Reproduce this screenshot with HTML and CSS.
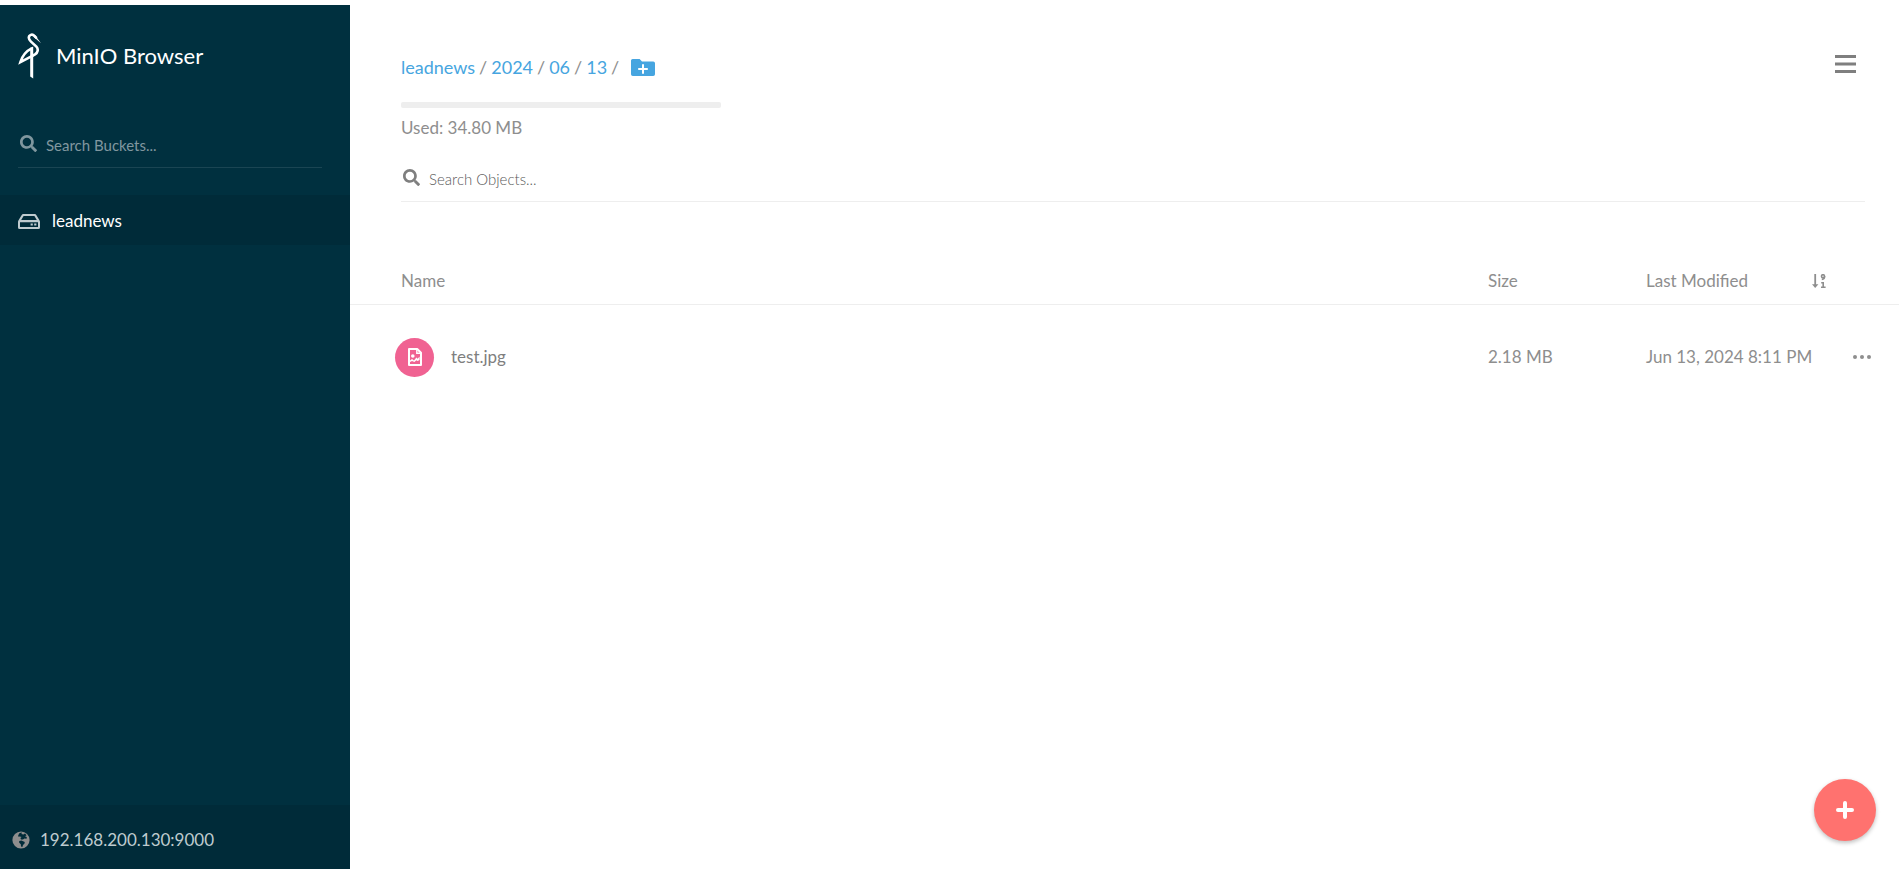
FILE: index.html
```
<!DOCTYPE html>
<html lang="en">
<head>
    <meta charset="UTF-8">
    <meta name="viewport" content="width=device-width, initial-scale=1.0">
    <title>MinIO Browser</title>
    <link rel="stylesheet" href="styles.css">
</head>
<body>
    <div class="page">
        <aside class="sidebar">
            <div class="brand">
                <svg class="brand-logo" viewBox="0 0 24 46" fill="none" stroke="#fff">
                    <path d="M18.6 5.2L16.4 2.8C14.2 .6 10.8 1.8 10.8 4.8C10.8 6.4 11.8 7.4 13 8.6L18.4 13.6C20.6 16 20 19.4 17 21.4C15.4 22.4 13 23.6 2.4 29.2C4 24 7.6 18.4 14 15.2" stroke-width="2.6"/>
                    <path d="M16.6 1.4L23 10.2L15.4 3.8ZM12.2 15L15.2 13.4V45.5L12.2 43.4Z" fill="#fff" stroke="none"/>
                </svg>
                <h1>MinIO Browser</h1>
            </div>

            <div class="search search-buckets">
                <svg viewBox="0 0 512 512"><path d="M505 442.7L405.3 343c-4.5-4.5-10.6-7-17-7H372c27.6-35.3 44-79.7 44-128C416 93.1 322.9 0 208 0S0 93.1 0 208s93.1 208 208 208c48.3 0 92.7-16.4 128-44v16.3c0 6.4 2.5 12.5 7 17l99.7 99.7c9.4 9.4 24.6 9.4 33.9 0l28.3-28.3c9.4-9.4 9.4-24.6.1-34zM208 336c-70.7 0-128-57.2-128-128 0-70.7 57.2-128 128-128 70.7 0 128 57.2 128 128 0 70.7-57.2 128-128 128z"/></svg>
                <input type="text" placeholder="Search Buckets..." aria-label="Search Buckets">
            </div>

            <nav class="buckets">
                <a class="bucket active" href="#leadnews">
                    <svg viewBox="0 0 22 15">
                        <path fill-rule="evenodd" d="M5.2 0H16.8Q17.8 0 18.3 .9L21.6 6.4Q22 7.2 22 8V13.4Q22 15 20.4 15H1.6Q0 15 0 13.4V8Q0 7.2 .4 6.4L3.7 .9Q4.2 0 5.2 0ZM5.6 2L3.2 6H18.8L16.4 2ZM2 8.2V13H20V8.2Z"/>
                        <path d="M12.6 9.4h2.2v2.2h-2.2zM16.2 9.4h2.2v2.2h-2.2z"/>
                    </svg>
                    <span>leadnews</span>
                </a>
            </nav>

            <div class="host">
                <svg viewBox="0 0 18 18">
                    <circle cx="9" cy="9" r="8.6" fill="#8e8e8e"/>
                    <path fill="#002b39" d="M7.6 2L10 1.4L9.4 3L11.4 3.4L13 2.6L14.6 4.2L13 5.2L14.8 6L14.6 7.8L12.4 7.4L11 8.6L9 8.4L8.4 7L9.6 6L7.8 5.4L6.4 5.8L6.2 4.2ZM7.2 10L9.4 9.6L12.8 11L12.4 12.8L11 14L10.4 16L9 15.6L8.8 13.2L7.2 11.8Z"/>
                </svg>
                <a href="#host">192.168.200.130:9000</a>
            </div>
        </aside>

        <main class="content">
            <header class="toolbar">
                <div class="location">
                    <nav class="breadcrumb">
                        <a href="#leadnews">leadnews</a><span>/</span><a href="#2024">2024</a><span>/</span><a href="#06">06</a><span>/</span><a href="#13">13</a><span>/</span>
                        <button class="icon-btn new-path" aria-label="New path">
                            <svg viewBox="0 0 24 17">
                                <path fill="#46a5e0" d="M1.6 0H8.6L11 2.4H22.2Q24 2.4 24 4.2V15.2Q24 17 22.2 17H1.8Q0 17 0 15.2V1.6Q0 0 1.6 0Z"/>
                                <path stroke="#fff" stroke-width="2" d="M12 5.2V14.8M7.2 10H16.8"/>
                            </svg>
                        </button>
                    </nav>
                    <div class="usage">
                        <div class="usage-bar"></div>
                        <p>Used: 34.80 MB</p>
                    </div>
                </div>
                <button class="icon-btn menu-btn" aria-label="Menu">
                    <svg viewBox="0 0 21 20" stroke="#7f7f7f" stroke-width="3"><path d="M0 2.5H21M0 10H21M0 17.5H21"/></svg>
                </button>
            </header>

            <div class="search search-objects">
                <svg viewBox="0 0 512 512"><path d="M505 442.7L405.3 343c-4.5-4.5-10.6-7-17-7H372c27.6-35.3 44-79.7 44-128C416 93.1 322.9 0 208 0S0 93.1 0 208s93.1 208 208 208c48.3 0 92.7-16.4 128-44v16.3c0 6.4 2.5 12.5 7 17l99.7 99.7c9.4 9.4 24.6 9.4 33.9 0l28.3-28.3c9.4-9.4 9.4-24.6.1-34zM208 336c-70.7 0-128-57.2-128-128 0-70.7 57.2-128 128-128 70.7 0 128 57.2 128 128 0 70.7-57.2 128-128 128z"/></svg>
                <input type="text" placeholder="Search Objects..." aria-label="Search Objects">
            </div>

            <table class="objects">
                <thead>
                    <tr>
                        <th class="col-name">Name</th>
                        <th class="col-size">Size</th>
                        <th class="col-date">
                            <div class="sortable">
                                Last Modified
                                <svg viewBox="0 0 14 14" fill="none" stroke="#8e8e8e">
                                    <path d="M3.2 0V12" stroke-width="1.8"/>
                                    <path d="M0 10.2H6.4L3.2 14Z" fill="#8e8e8e" stroke="none"/>
                                    <circle cx="11" cy="2.2" r="1.5" stroke-width="1.6"/>
                                    <path d="M12.6 2.2Q13 5 9.8 5.4M9.2 8.8H11.2V13.2M9 13.2H13.6" stroke-width="1.6"/>
                                </svg>
                            </div>
                        </th>
                        <th class="col-actions"></th>
                    </tr>
                </thead>
                <tbody>
                    <tr>
                        <td class="col-name">
                            <div class="object">
                                <span class="object-icon">
                                    <svg viewBox="0 0 14 18" fill="none" stroke="#fff">
                                        <path d="M1 1H9.2L13 4.8V17H1Z" stroke-width="2" stroke-linejoin="round"/>
                                        <path d="M8.8 1V5.2H13" stroke-width="1.4"/>
                                        <circle cx="4.8" cy="8" r="1.8" fill="#fff" stroke="none"/>
                                        <path d="M2 12.4L4 11L6 12.4L8.4 9.6L9.6 10.8L11.6 8.6V12L9.6 13L8.4 12.2L6.4 14L4 13L2 14Z" fill="#fff" stroke="none"/>
                                    </svg>
                                </span>
                                <a href="#test.jpg">test.jpg</a>
                            </div>
                        </td>
                        <td class="col-size">2.18 MB</td>
                        <td class="col-date">Jun 13, 2024 8:11 PM</td>
                        <td class="col-actions">
                            <button class="icon-btn more-btn" aria-label="Actions">
                                <svg viewBox="0 0 18 4" fill="#8e8e8e"><circle cx="2" cy="2" r="2"/><circle cx="9" cy="2" r="2"/><circle cx="16" cy="2" r="2"/></svg>
                            </button>
                        </td>
                    </tr>
                </tbody>
            </table>
        </main>

        <button class="create-btn" aria-label="Create">
            <svg viewBox="0 0 18 18" stroke="#fff" stroke-width="4" stroke-linecap="round"><path d="M9 2V16M2 9H16"/></svg>
        </button>
    </div>
</body>
</html>
```
FILE: styles.css
```
* {
    margin: 0;
    padding: 0;
    box-sizing: border-box;
}

body {
    font-family: Lato, sans-serif;
    font-size: 17px;
    line-height: 24px;
    color: #8e8e8e;
    background: #fff;
}

a {
    color: inherit;
    text-decoration: none;
}

svg {
    display: block;
    flex-shrink: 0;
}

.icon-btn {
    border: none;
    background: none;
    cursor: pointer;
}

.page {
    display: flex;
    min-height: 100vh;
    padding-top: 5px;
}

/* Sidebar */
.sidebar {
    display: flex;
    flex-direction: column;
    flex: 0 0 350px;
    background: #00303f;
}

.brand {
    display: flex;
    align-items: center;
    gap: 14px;
    padding: 28px 18px 0;
    color: #fff;
}

.brand-logo {
    width: 24px;
    height: 46px;
}

.brand h1 {
    font-size: 22px;
    font-weight: 400;
}

.search {
    display: flex;
    align-items: center;
    border-bottom: 1px solid #eee;
}

.search svg {
    width: 17px;
    height: 17px;
    fill: #7f7f7f;
}

.search input {
    flex: 1;
    min-width: 0;
    padding-top: 2px;
    border: none;
    outline: none;
    background: none;
    font-family: inherit;
    font-size: 15px;
    color: inherit;
}

.search-buckets {
    height: 48px;
    margin: 41px 28px 0 18px;
    padding-left: 2px;
    gap: 9px;
    border-color: #1a4553;
}

.search-buckets svg {
    fill: #80979f;
}

.search-buckets input {
    color: #fff;
}

.search-buckets input::placeholder {
    color: #80979f;
}

.buckets {
    flex: 1;
    padding-top: 27px;
}

.bucket {
    display: flex;
    align-items: center;
    gap: 12px;
    height: 50px;
    padding: 2px 18px 0;
    color: #fff;
}

.bucket.active {
    background: #002b39;
}

.bucket svg {
    width: 22px;
    height: 15px;
    fill: #bfcbcf;
}

.host {
    display: flex;
    align-items: center;
    gap: 10px;
    height: 64px;
    padding: 6px 12px 0;
    background: #002b39;
    color: #bfcbcf;
}

.host svg {
    width: 18px;
    height: 18px;
}

/* Main area */
.content {
    flex: 1;
    min-width: 0;
}

.toolbar {
    display: flex;
    justify-content: space-between;
    padding: 49px 43px 0 51px;
}

.breadcrumb {
    display: flex;
    align-items: center;
    gap: 4px;
    padding-top: 1px;
    font-size: 18px;
}

.breadcrumb a {
    color: #46a5e0;
}

.new-path {
    margin-left: 8px;
}

.new-path svg {
    width: 24px;
    height: 17px;
}

.usage {
    margin-top: 23px;
}

.usage-bar {
    width: 320px;
    height: 6px;
    margin-bottom: 8px;
    border-radius: 2px;
    background: #eee;
}

.menu-btn {
    align-self: flex-start;
}

.menu-btn svg {
    width: 21px;
    height: 20px;
}

.search-objects {
    height: 48px;
    margin: 14px 34px 0 51px;
    padding-left: 2px;
    gap: 9px;
}

.search-objects input {
    font-weight: 300;
}

.search-objects input::placeholder {
    color: #5a5a5a;
}

.objects {
    width: 100%;
    margin-top: 54px;
    table-layout: fixed;
    border-collapse: collapse;
}

.objects th {
    height: 48px;
    padding-top: 2px;
    border-bottom: 1px solid #eee;
    font-weight: 400;
    text-align: left;
}

.objects td {
    height: 105px;
    padding-top: 1px;
}

.objects .col-size {
    width: 158px;
}

.objects .col-date {
    width: 180px;
    white-space: nowrap;
}

.objects .col-actions {
    width: 73px;
    padding-left: 27px;
}

.objects th.col-name {
    padding-left: 51px;
}

.objects td.col-name {
    padding-left: 45px;
}

.sortable {
    display: flex;
    align-items: center;
    justify-content: space-between;
}

.sortable svg {
    width: 14px;
    height: 14px;
}

.object {
    display: flex;
    align-items: center;
    gap: 17px;
}

.object a {
    color: #7f7f7f;
}

.object-icon {
    display: flex;
    align-items: center;
    justify-content: center;
    width: 39px;
    height: 39px;
    border-radius: 50%;
    background: #f06292;
}

.object-icon svg {
    width: 14px;
    height: 18px;
}

.more-btn {
    display: block;
}

.more-btn svg {
    width: 18px;
    height: 4px;
}

.create-btn {
    position: fixed;
    right: 23px;
    bottom: 28px;
    display: flex;
    align-items: center;
    justify-content: center;
    width: 62px;
    height: 62px;
    border: none;
    border-radius: 50%;
    background: #ff726f;
    box-shadow: 0 2px 4px rgba(0, 0, 0, 0.25);
    cursor: pointer;
}

.create-btn svg {
    width: 18px;
    height: 18px;
}
```
